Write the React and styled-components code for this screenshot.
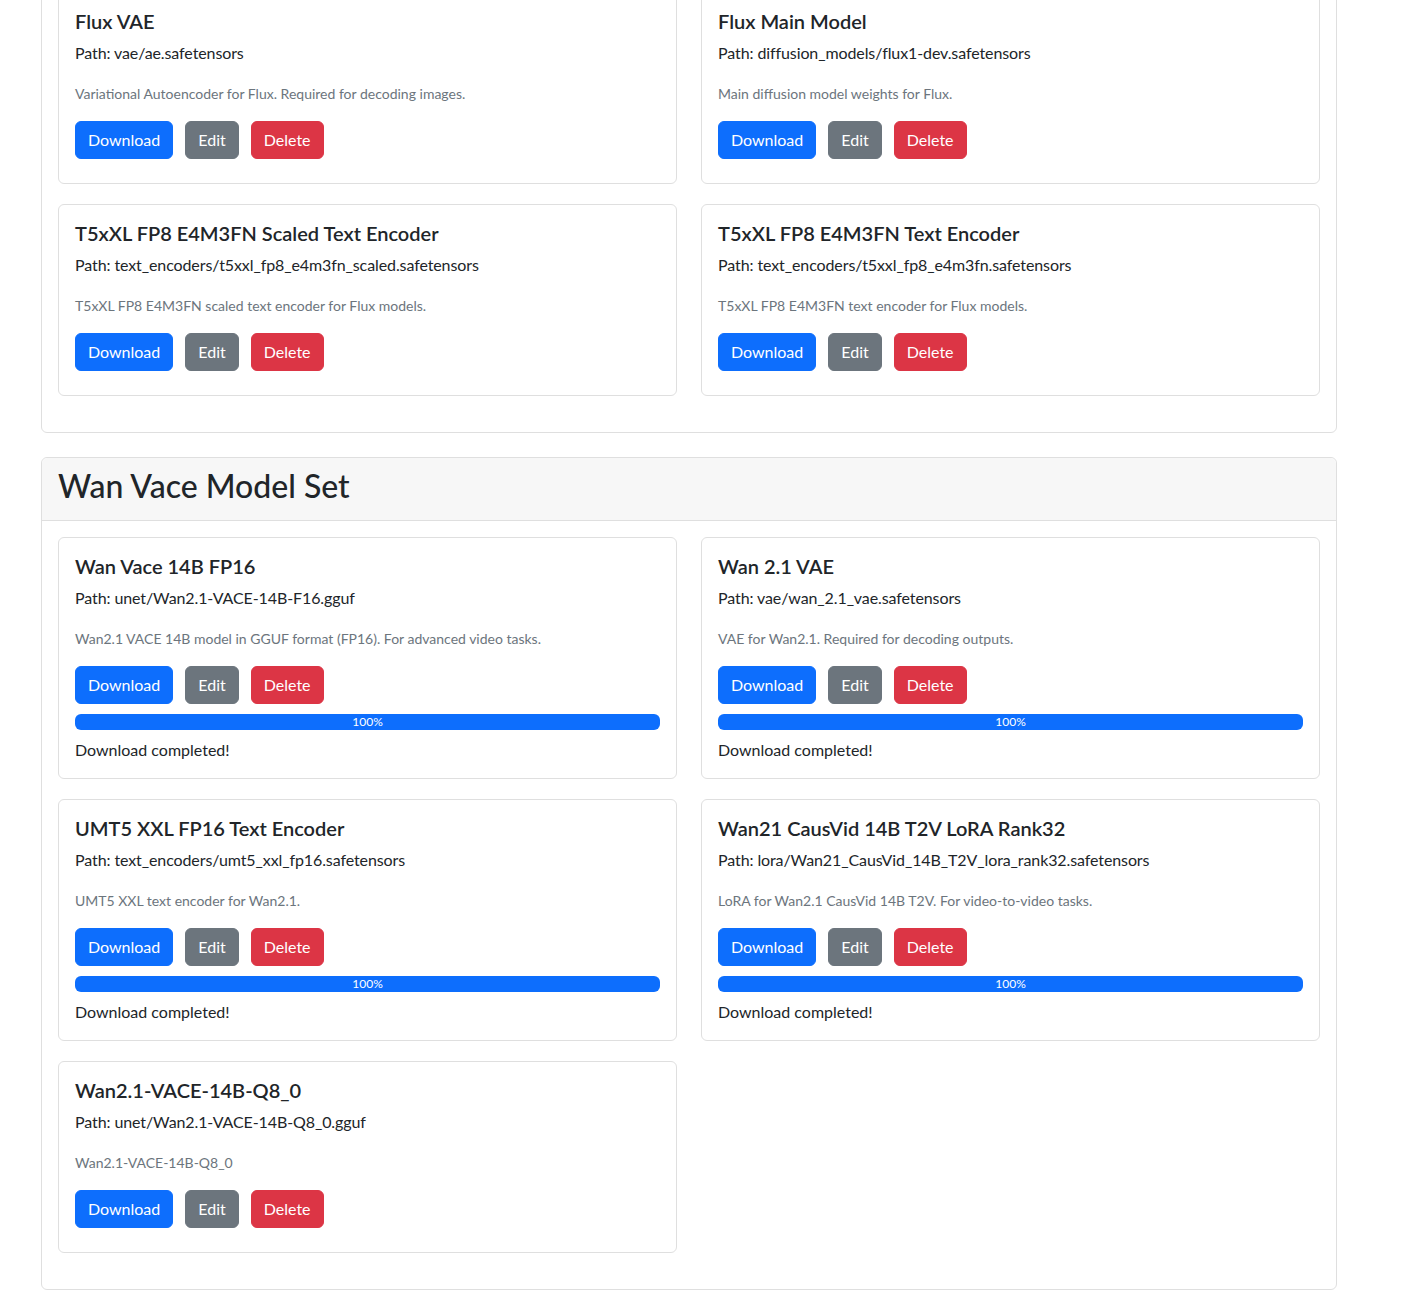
import React from 'react';
import styled, { createGlobalStyle } from 'styled-components';

const GlobalStyle = createGlobalStyle`
  html, body {
    margin: 0;
    padding: 0;
    background: #fff;
    overflow: hidden;
  }
  body {
    font-family: Lato, "Liberation Sans", sans-serif;
    font-size: 16px;
    line-height: 1.5;
    color: #212529;
  }
`;

const Container = styled.div`
  width: 1296px;
  margin: -88px 0 0 41px;
`;

const SetCard = styled.section`
  border: 1px solid #dfdfdf;
  border-radius: 6px;
  margin-bottom: 24px;
  background: #fff;
`;

const SetHeader = styled.div`
  background: #f7f7f7;
  border-bottom: 1px solid #dfdfdf;
  border-radius: 6px 6px 0 0;
  padding: 9px 16px 7px;
`;

const SetTitle = styled.h2`
  margin: 0 0 8px;
  font-size: 32px;
  font-weight: 500;
  line-height: 38px;
`;

const SetBody = styled.div`
  padding: 16px;
`;

const Grid = styled.div`
  display: grid;
  grid-template-columns: 1fr 1fr;
  column-gap: 24px;
  align-items: start;
`;

const ModelCard = styled.div`
  border: 1px solid #dfdfdf;
  border-radius: 6px;
  padding: 16px;
  margin-bottom: 20px;
`;

const ModelTitle = styled.h5`
  margin: 0 0 8px;
  font-size: 20px;
  font-weight: 600;
  line-height: 24px;
`;

const Text = styled.p`
  margin: 0 0 16px;
  letter-spacing: -0.1px;
`;

const Muted = styled.small`
  font-size: 14px;
  letter-spacing: 0;
  color: #6c757d;
`;

const Actions = styled.div`
  display: flex;
  gap: 12px;
  margin-bottom: ${(p) => (p.$last ? '8px' : '0')};
`;

const variants = {
  primary: '#0d6efd',
  secondary: '#6c757d',
  danger: '#dc3545',
};

const Button = styled.button`
  font-family: inherit;
  font-size: 16px;
  line-height: 1.5;
  padding: 6px 12px;
  border: 1px solid ${(p) => variants[p.$variant]};
  background: ${(p) => variants[p.$variant]};
  color: #fff;
  border-radius: 6px;
  cursor: pointer;
`;

const Progress = styled.div`
  margin-top: 10px;
  height: 16px;
  border-radius: 6px;
  background: #e9ecef;
  overflow: hidden;
  display: flex;
`;

const ProgressBar = styled.div`
  background: #0d6efd;
  color: #fff;
  font-size: 12px;
  line-height: 16px;
  text-align: center;
`;

const Status = styled.div`
  margin-top: 8px;
`;

const sets = [
  {
    name: 'Flux Model Set',
    models: [
      { title: 'Flux VAE', path: 'vae/ae.safetensors', desc: 'Variational Autoencoder for Flux. Required for decoding images.' },
      { title: 'Flux Main Model', path: 'diffusion_models/flux1-dev.safetensors', desc: 'Main diffusion model weights for Flux.' },
      { title: 'T5xXL FP8 E4M3FN Scaled Text Encoder', path: 'text_encoders/t5xxl_fp8_e4m3fn_scaled.safetensors', desc: 'T5xXL FP8 E4M3FN scaled text encoder for Flux models.' },
      { title: 'T5xXL FP8 E4M3FN Text Encoder', path: 'text_encoders/t5xxl_fp8_e4m3fn.safetensors', desc: 'T5xXL FP8 E4M3FN text encoder for Flux models.' },
    ],
  },
  {
    name: 'Wan Vace Model Set',
    models: [
      { title: 'Wan Vace 14B FP16', path: 'unet/Wan2.1-VACE-14B-F16.gguf', desc: 'Wan2.1 VACE 14B model in GGUF format (FP16). For advanced video tasks.', progress: 100 },
      { title: 'Wan 2.1 VAE', path: 'vae/wan_2.1_vae.safetensors', desc: 'VAE for Wan2.1. Required for decoding outputs.', progress: 100 },
      { title: 'UMT5 XXL FP16 Text Encoder', path: 'text_encoders/umt5_xxl_fp16.safetensors', desc: 'UMT5 XXL text encoder for Wan2.1.', progress: 100 },
      { title: 'Wan21 CausVid 14B T2V LoRA Rank32', path: 'lora/Wan21_CausVid_14B_T2V_lora_rank32.safetensors', desc: 'LoRA for Wan2.1 CausVid 14B T2V. For video-to-video tasks.', progress: 100 },
      { title: 'Wan2.1-VACE-14B-Q8_0', path: 'unet/Wan2.1-VACE-14B-Q8_0.gguf', desc: 'Wan2.1-VACE-14B-Q8_0' },
    ],
  },
];

function Model({ model }) {
  const hasProgress = model.progress != null;
  return (
    <ModelCard>
      <ModelTitle>{model.title}</ModelTitle>
      <Text>Path: {model.path}</Text>
      <Text>
        <Muted>{model.desc}</Muted>
      </Text>
      <Actions $last={!hasProgress}>
        <Button $variant="primary">Download</Button>
        <Button $variant="secondary">Edit</Button>
        <Button $variant="danger">Delete</Button>
      </Actions>
      {hasProgress && (
        <>
          <Progress>
            <ProgressBar style={{ width: `${model.progress}%` }}>{model.progress}%</ProgressBar>
          </Progress>
          <Status>Download completed!</Status>
        </>
      )}
    </ModelCard>
  );
}

export default function App() {
  return (
    <>
      <GlobalStyle />
      <Container>
        {sets.map((set) => (
          <SetCard key={set.name}>
            <SetHeader>
              <SetTitle>{set.name}</SetTitle>
            </SetHeader>
            <SetBody>
              <Grid>
                {set.models.map((m) => (
                  <Model key={m.title} model={m} />
                ))}
              </Grid>
            </SetBody>
          </SetCard>
        ))}
      </Container>
    </>
  );
}
